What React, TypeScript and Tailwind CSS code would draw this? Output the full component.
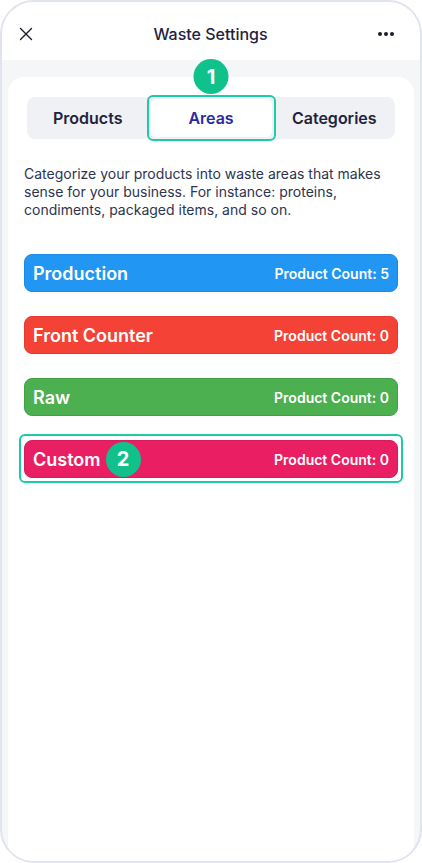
import { X } from "lucide-react";

type Area = {
    name: string;
    count: number;
    color: string;
    marked?: boolean;
}

const areas: Area[] = [
    { name: "Production", count: 5, color: "bg-[#2196f3] border-[#1e88e5]" },
    { name: "Front Counter", count: 0, color: "bg-[#f44336] border-[#e53935]" },
    { name: "Raw", count: 0, color: "bg-[#4caf50] border-[#43a047]" },
    { name: "Custom", count: 0, color: "bg-[#e91e63] border-[#d81b60]", marked: true },
]

const Step = ({ n }: { n: number }) => (
    <div className="flex items-center justify-center w-[35px] h-[35px] rounded-full bg-[#10c18b] text-white text-[20px] font-bold leading-none">
        {n}
    </div>
)

const AreaRow = ({ area }: { area: Area }) => (
    <div className="relative mx-4">
        {area.marked && <div className="absolute -left-[5px] -right-[5px] -top-[6px] -bottom-[5px] border-2 border-[#1fcaa7] rounded-md" />}
        <div className={`relative flex items-center justify-between h-[38px] px-2 rounded-lg border ${area.color}`}>
            <div className="flex items-center gap-[5px]">
                <span className="text-white text-[18px] font-semibold">{area.name}</span>
                {area.marked && <Step n={2} />}
            </div>
            <span className="text-white text-[14px] font-semibold">Product Count: {area.count}</span>
        </div>
    </div>
)

export default function App() {
    return (
        <div className="w-[422px] h-[863px] bg-white" style={{ fontFamily: "Inter, 'Noto Sans', sans-serif" }}>
            <div className="flex flex-col h-full overflow-hidden border-2 border-[#e0e4ef] rounded-[34px] bg-[#f5f6f8]">
                <header className="flex items-center justify-between h-[58px] pl-[13px] pr-[16px] pt-[6px] bg-white shrink-0">
                    <X size={22} strokeWidth={1.5} className="text-[#1a1d2e]" />
                    <h1 className="text-[16px] font-medium text-[#1f2340] pl-[6px]">Waste Settings</h1>
                    <div className="flex items-center gap-[2px] pr-[10px]">
                        <span className="w-[4px] h-[4px] rounded-full bg-[#1a1d2e]" />
                        <span className="w-[4px] h-[4px] rounded-full bg-[#1a1d2e]" />
                        <span className="w-[4px] h-[4px] rounded-full bg-[#1a1d2e]" />
                    </div>
                </header>

                <div className="flex-1 mt-[17px] mx-[6px] bg-white rounded-t-[16px] pt-[20px]">
                    <div className="relative mx-[19px] flex items-center h-[42px] p-[2px] bg-[#eff1f4] rounded-lg">
                        <div className="flex-1 text-center text-[16px] font-semibold text-[#1f2340]">Products</div>
                        <div className="relative w-[129px] h-[46px] -my-[4px] border-2 border-[#1fcaa7] rounded-md p-[2px]">
                            <div className="flex items-center justify-center h-full bg-white rounded-md text-[16px] font-semibold text-[#2b2c9c]">Areas</div>
                            <div className="absolute left-1/2 -translate-x-1/2 -top-[38px]">
                                <Step n={1} />
                            </div>
                        </div>
                        <div className="flex-1 text-center text-[16px] font-semibold text-[#1f2340]">Categories</div>
                    </div>

                    <p className="mx-4 mt-[26px] text-[14px] leading-[18px] text-[#2d3450]">
                        Categorize your products into waste areas that makes sense for your business. For instance: proteins, condiments, packaged items, and so on.
                    </p>

                    <div className="flex flex-col gap-[24px] mt-[35px]">
                        {areas.map((a) => <AreaRow key={a.name} area={a} />)}
                    </div>
                </div>
            </div>
        </div>
    )
}
